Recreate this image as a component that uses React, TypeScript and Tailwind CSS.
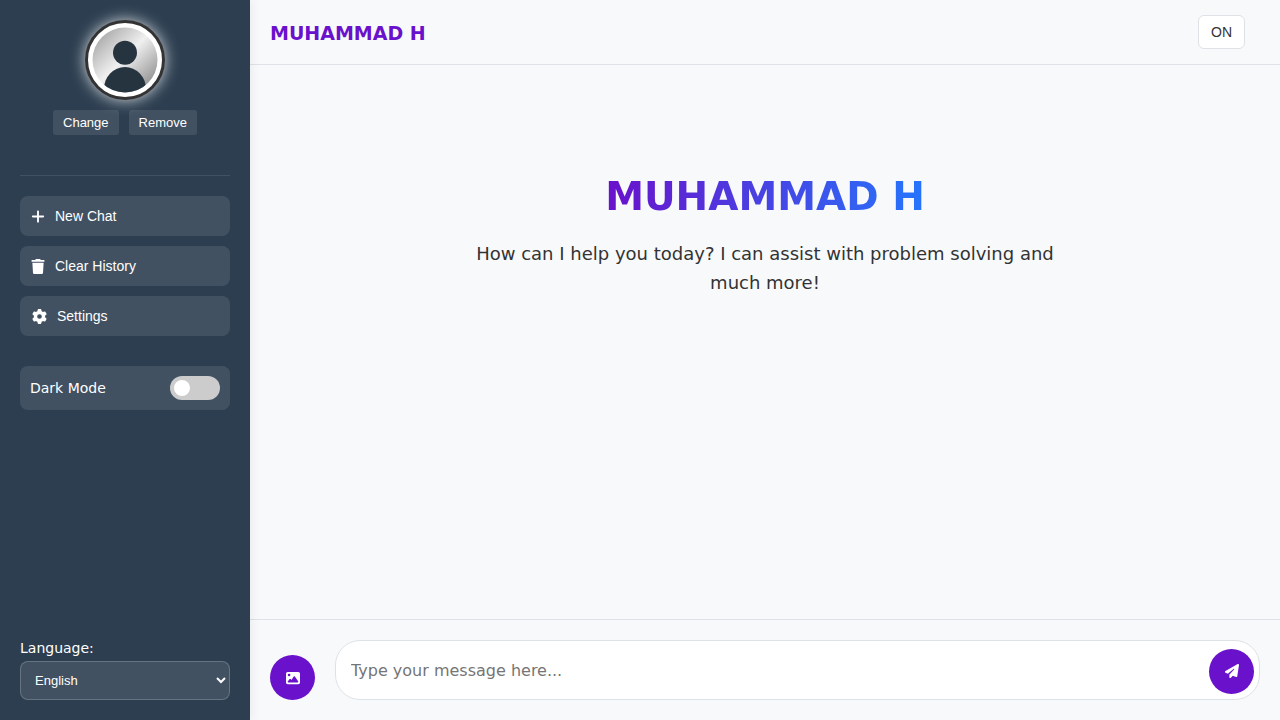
import { useState } from "react";
import { FaGear, FaImage, FaPaperPlane, FaPlus, FaTrash } from "react-icons/fa6";

const NAME = "MUHAMMAD H";

const actions = [
  { label: "New Chat", icon: FaPlus, width: "w-[14px]" },
  { label: "Clear History", icon: FaTrash, width: "w-[14px]" },
  { label: "Settings", icon: FaGear, width: "w-4" },
];

function Avatar() {
  return (
    <div className="size-20 rounded-full border-[3px] border-[#333333] bg-white shadow-[0_0_15px_rgba(255,255,255,0.8)]">
      <svg viewBox="0 0 74 74" className="size-full" role="img" aria-label="Profile picture">
        <defs>
          <linearGradient id="avatar-bg" x1="0" y1="0" x2="1" y2="1">
            <stop offset="0.1" stopColor="#a8a8a8" />
            <stop offset="0.48" stopColor="#f0f0f0" />
            <stop offset="0.9" stopColor="#909090" />
          </linearGradient>
          <clipPath id="avatar-clip">
            <circle cx="37" cy="37" r="32.5" />
          </clipPath>
        </defs>
        <circle cx="37" cy="37" r="32.5" fill="url(#avatar-bg)" />
        <g clipPath="url(#avatar-clip)" fill="#263440">
          <circle cx="37" cy="29.7" r="12" />
          <path d="M16 66a21 22 0 0 1 42 0v8H16z" />
        </g>
      </svg>
    </div>
  );
}

function Sidebar() {
  const [dark, setDark] = useState(false);

  return (
    <aside className="z-10 flex w-[250px] shrink-0 flex-col bg-[#2c3e50] p-5 text-white shadow-[2px_0_10px_rgba(0,0,0,0.06)]">
      <div className="flex flex-col items-center gap-2.5 border-b border-white/10 pb-10">
        <Avatar />
        <div className="flex gap-2.5 font-['Liberation_Sans',sans-serif] text-[13px] leading-[15px]">
          <button type="button" className="rounded-[3px] bg-white/10 px-2.5 py-[5px]">Change</button>
          <button type="button" className="rounded-[3px] bg-white/10 px-2.5 py-[5px]">Remove</button>
        </div>
      </div>

      <nav className="mt-5 flex flex-col gap-2.5">
        {actions.map(({ label, icon: Icon, width }) => (
          <button
            key={label}
            type="button"
            className="flex h-10 items-center gap-2.5 rounded-lg bg-white/10 px-[11px] font-['Liberation_Sans',sans-serif] text-sm"
          >
            <span className={`flex justify-center ${width}`}>
              <Icon size={15} />
            </span>
            {label}
          </button>
        ))}
      </nav>

      <label className="mt-[30px] flex h-11 cursor-pointer items-center justify-between rounded-lg bg-white/10 px-2.5 text-sm">
        Dark Mode
        <input
          type="checkbox"
          role="switch"
          checked={dark}
          onChange={(e) => setDark(e.target.checked)}
          className="h-6 w-[50px] cursor-pointer appearance-none rounded-full bg-[#cccccc] p-1 before:block before:size-4 before:rounded-full before:bg-white before:transition checked:bg-[#6a11cb] checked:before:translate-x-[26px]"
        />
      </label>

      <div className="mt-auto flex flex-col gap-[3px]">
        <label htmlFor="language" className="text-sm">Language:</label>
        <select
          id="language"
          defaultValue="en"
          className="h-[39px] w-full rounded-lg border border-white/20 bg-white/10 px-2.5 font-['Liberation_Sans',sans-serif] text-[13px]"
        >
          <option value="en" className="text-black">English</option>
          <option value="ur" className="text-black">Urdu</option>
        </select>
      </div>
    </aside>
  );
}

export default function App() {
  const [voice, setVoice] = useState(true);
  const [message, setMessage] = useState("");

  return (
    <div className="flex min-h-screen bg-[#f8f9fb] font-['DejaVu_Sans',sans-serif] text-[#333333]">
      <Sidebar />
      <main className="flex min-w-0 flex-1 flex-col">
        <header className="flex items-center justify-between border-b border-[#dee2e6] py-[15px] pr-[35px] pl-5">
          <h2 className="pt-0.5 text-[19px] font-bold text-[#6a11cb]">{NAME}</h2>
          <button
            type="button"
            onClick={() => setVoice(!voice)}
            className="h-[34px] rounded-md border border-[#dee2e6] bg-white px-3 font-['Liberation_Sans',sans-serif] text-sm"
          >
            {voice ? "ON" : "OFF"}
          </button>
        </header>

        <section className="flex flex-1 flex-col items-center px-5 pt-[100px] text-center">
          <h1 className="bg-linear-to-r/srgb from-[#6a11cb] to-[#2575fc] bg-clip-text text-[39px] leading-[64px] font-bold text-transparent">
            {NAME}
          </h1>
          <p className="mt-2.5 max-w-[600px] text-lg leading-[29px]">
            How can I help you today? I can assist with problem solving and much more!
          </p>
        </section>

        <form
          onSubmit={(e) => e.preventDefault()}
          className="flex items-end gap-5 border-t border-[#dee2e6] p-5"
        >
          <button
            type="button"
            aria-label="Attach image"
            className="flex size-[45px] shrink-0 items-center justify-center rounded-full bg-[#6a11cb] text-white"
          >
            <FaImage size={14} />
          </button>
          <div className="flex h-[60px] min-w-0 flex-1 items-center rounded-[25px] border border-[#dee2e6] bg-white pt-0.5 pr-[5px] pl-[15px]">
            <input
              type="text"
              aria-label="Message"
              value={message}
              onChange={(e) => setMessage(e.target.value)}
              placeholder="Type your message here..."
              className="min-w-0 flex-1 bg-transparent text-base outline-none placeholder:text-[#757575]"
            />
            <button
              type="submit"
              aria-label="Send"
              className="flex size-[45px] shrink-0 items-center justify-center rounded-full bg-[#6a11cb] text-white"
            >
              <FaPaperPlane size={14} />
            </button>
          </div>
        </form>
      </main>
    </div>
  );
}
